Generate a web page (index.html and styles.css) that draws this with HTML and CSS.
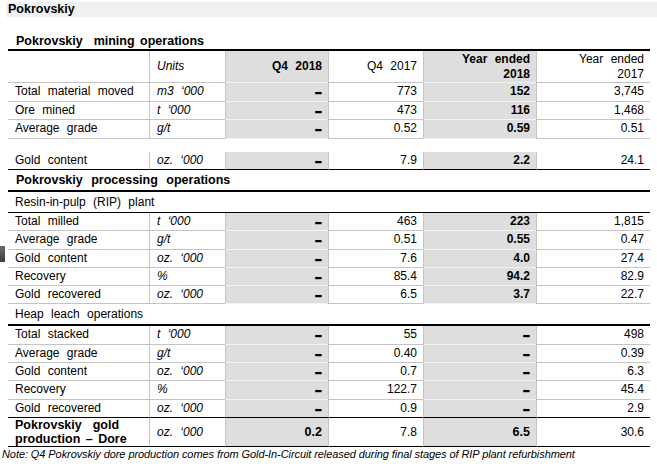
FILE: index.html
```html
<!DOCTYPE html>
<html>
<head>
<meta charset="utf-8">
<title>Pokrovskiy</title>
<link rel="stylesheet" href="styles.css">
</head>
<body>
<div class="title">Pokrovskiy</div>
<div class="section-title">Pokrovskiy&nbsp; mining operations</div>
<table class="ops">
  <colgroup>
    <col class="c-label"><col class="c-units"><col class="c-q418"><col class="c-q417"><col class="c-y18"><col class="c-y17">
  </colgroup>
  <tr class="head">
    <td></td>
    <td class="units">Units</td>
    <td class="g num b">Q4 2018</td>
    <td class="num">Q4 2017</td>
    <td class="g num b">Year ended<br>2018</td>
    <td class="num">Year ended<br>2017</td>
  </tr>
  <tr class="mine">
    <td>Total material moved</td><td class="units">m3 ‘000</td><td class="g num b dash">–</td><td class="num">773</td><td class="g num b">152</td><td class="num">3,745</td>
  </tr>
  <tr class="mine">
    <td>Ore mined</td><td class="units">t ‘000</td><td class="g num b dash">–</td><td class="num">473</td><td class="g num b">116</td><td class="num">1,468</td>
  </tr>
  <tr class="mine">
    <td>Average grade</td><td class="units">g/t</td><td class="g num b dash">–</td><td class="num">0.52</td><td class="g num b">0.59</td><td class="num">0.51</td>
  </tr>
  <tr class="gap"><td colspan="6"></td></tr>
  <tr class="mine end">
    <td>Gold content</td><td class="units">oz. ‘000</td><td class="g num b dash">–</td><td class="num">7.9</td><td class="g num b">2.2</td><td class="num">24.1</td>
  </tr>
  <tr class="section"><td colspan="6">Pokrovskiy processing operations</td></tr>
  <tr class="sub"><td colspan="6">Resin-in-pulp (RIP) plant</td></tr>
  <tr>
    <td>Total milled</td><td class="units">t ‘000</td><td class="g num b dash">–</td><td class="num">463</td><td class="g num b">223</td><td class="num">1,815</td>
  </tr>
  <tr>
    <td>Average grade</td><td class="units">g/t</td><td class="g num b dash">–</td><td class="num">0.51</td><td class="g num b">0.55</td><td class="num">0.47</td>
  </tr>
  <tr>
    <td>Gold content</td><td class="units">oz. ‘000</td><td class="g num b dash">–</td><td class="num">7.6</td><td class="g num b">4.0</td><td class="num">27.4</td>
  </tr>
  <tr>
    <td>Recovery</td><td class="units">%</td><td class="g num b dash">–</td><td class="num">85.4</td><td class="g num b">94.2</td><td class="num">82.9</td>
  </tr>
  <tr>
    <td>Gold recovered</td><td class="units">oz. ‘000</td><td class="g num b dash">–</td><td class="num">6.5</td><td class="g num b">3.7</td><td class="num">22.7</td>
  </tr>
  <tr class="sub heap"><td colspan="6">Heap leach operations</td></tr>
  <tr>
    <td>Total stacked</td><td class="units">t ‘000</td><td class="g num b dash">–</td><td class="num">55</td><td class="g num b dash">–</td><td class="num">498</td>
  </tr>
  <tr>
    <td>Average grade</td><td class="units">g/t</td><td class="g num b dash">–</td><td class="num">0.40</td><td class="g num b dash">–</td><td class="num">0.39</td>
  </tr>
  <tr>
    <td>Gold content</td><td class="units">oz. ‘000</td><td class="g num b dash">–</td><td class="num">0.7</td><td class="g num b dash">–</td><td class="num">6.3</td>
  </tr>
  <tr>
    <td>Recovery</td><td class="units">%</td><td class="g num b dash">–</td><td class="num">122.7</td><td class="g num b dash">–</td><td class="num">45.4</td>
  </tr>
  <tr class="end">
    <td>Gold recovered</td><td class="units">oz. ‘000</td><td class="g num b dash">–</td><td class="num">0.9</td><td class="g num b dash">–</td><td class="num">2.9</td>
  </tr>
  <tr class="end total">
    <td class="b">Pokrovskiy&nbsp; gold<br>production – Dore</td><td class="units">oz. ‘000</td><td class="g num b">0.2</td><td class="num">7.8</td><td class="g num b">6.5</td><td class="num">30.6</td>
  </tr>
</table>
<div class="note">Note: Q4 Pokrovskiy dore production comes from Gold-In-Circuit released during final stages of RIP plant refurbishment</div>
<div class="mark"></div>
</body>
</html>
```
FILE: styles.css
```css
* { box-sizing: border-box; }
body {
  margin: 0;
  font-family: "Liberation Sans", Arial, sans-serif;
  font-size: 12px;
  color: #000;
  background: #fff;
  word-spacing: 4px;
  position: relative;
}
.title {
  margin: 2px 0 0 6px;
  height: 15px;
  line-height: 15px;
  padding-left: 2px;
  background: #f0f0f0;
  font-weight: bold;
  font-size: 12.5px;
  word-spacing: 0;
}
.section-title {
  margin: 16px 0 0 8px;
  height: 16px;
  line-height: 16px;
  padding-left: 8px;
  font-weight: bold;
  font-size: 12.5px;
  word-spacing: 2px;
}
.ops {
  margin-left: 8px;
  width: 642px;
  border-collapse: separate;
  border-spacing: 0;
  table-layout: fixed;
  border-top: 2px solid #000;
}
.c-label { width: 141px; }
.c-units { width: 76px; }
.c-q418 { width: 103px; }
.c-q417 { width: 95px; }
.c-y18 { width: 113px; }
.c-y17 { width: 114px; }
.ops td {
  padding: 0 6px 0 7px;
  line-height: 17.3px;
  border-bottom: 1px solid #c4c4c4;
  border-left: 1px solid #c4c4c4;
  white-space: nowrap;
  vertical-align: middle;
}
.ops td:first-child { border-left: none; }
.ops td.g { background: #dedede; border-bottom-color: #f3f3f3; }
.ops td.num { text-align: right; }
.ops td.b { font-weight: bold; }
.ops td.dash { font-size: 13px; text-shadow: 0 0.6px 0 #000; }
.ops td.units { font-style: italic; padding-left: 7px; }
.ops .head td { line-height: 14.5px; padding-top: 1px; padding-bottom: 1px; }
.ops .mine td { line-height: 17.5px; }
.ops .gap td { height: 13px; padding: 0; line-height: 0; border: none; }
.ops .end td { border-bottom-color: #000; }
.ops .section td {
  font-weight: bold;
  font-size: 12.5px;
  line-height: 20px;
  padding-left: 8px;
  border-bottom: 2px solid #000;
  word-spacing: 5px;
}
.ops .sub td {
  line-height: 20px;
  border-bottom: 1px solid #000;
}
.ops .sub.heap td {
  line-height: 20px;
  border-bottom: 2px solid #000;
}
.ops .total td { line-height: 14px; }
.ops .total td.b:first-child { font-size: 12.5px; word-spacing: 2px; }
.ops .total td.g { font-size: 12.5px; }
.note {
  margin-left: 2px;
  line-height: 14px;
  font-size: 11px;
  font-style: italic;
  word-spacing: 0;
  letter-spacing: -0.08px;
}
.mark {
  position: absolute;
  left: 0;
  top: 246px;
  width: 5px;
  height: 16px;
  background: linear-gradient(#6a6a6a, #3c3c3c);
}
```
